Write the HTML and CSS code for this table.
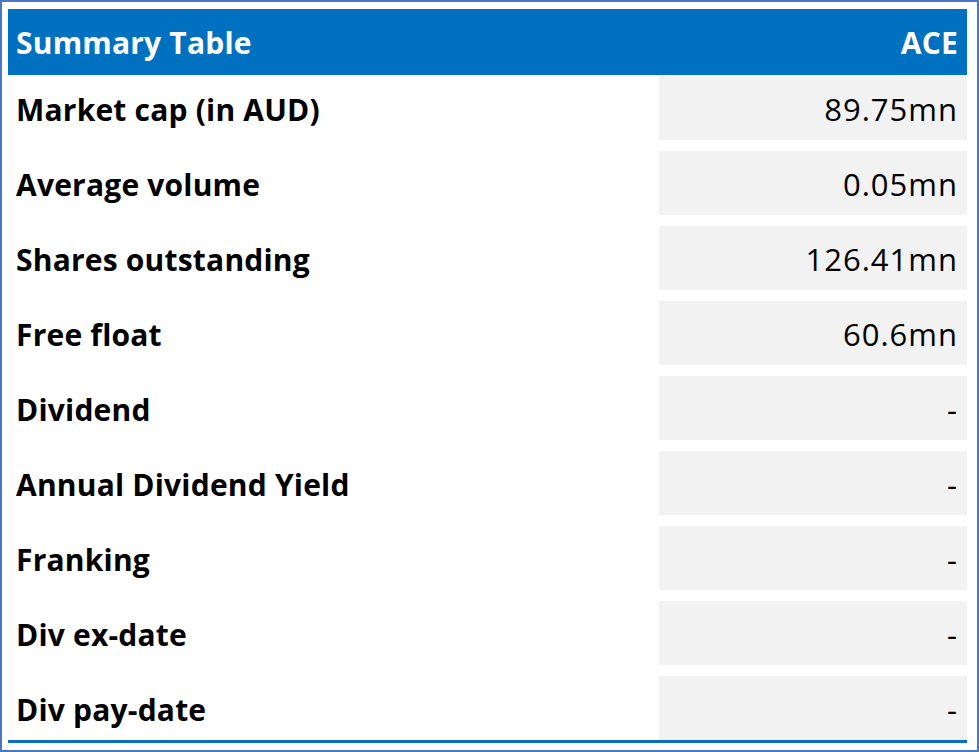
FILE: index.html
```html
<!DOCTYPE html>
<html>
<head>
<meta charset="utf-8">
<link rel="stylesheet" href="styles.css">
</head>
<body>
<div class="frame">
  <div class="table">
    <div class="head">
      <span class="head-title">Summary Table</span>
      <span class="head-ticker">ACE</span>
    </div>
    <div class="rows">
      <div class="row"><div class="label">Market cap (in AUD)</div><div class="value">89.75mn</div></div>
      <div class="row"><div class="label">Average volume</div><div class="value">0.05mn</div></div>
      <div class="row"><div class="label">Shares outstanding</div><div class="value">126.41mn</div></div>
      <div class="row"><div class="label">Free float</div><div class="value">60.6mn</div></div>
      <div class="row"><div class="label">Dividend</div><div class="value">-</div></div>
      <div class="row"><div class="label">Annual Dividend Yield</div><div class="value">-</div></div>
      <div class="row"><div class="label">Franking</div><div class="value">-</div></div>
      <div class="row"><div class="label">Div ex-date</div><div class="value">-</div></div>
      <div class="row"><div class="label">Div pay-date</div><div class="value">-</div></div>
    </div>
  </div>
</div>
</body>
</html>
```
FILE: styles.css
```css
html, body {
  margin: 0;
  padding: 0;
  background: #ffffff;
}
body {
  width: 979px;
  height: 752px;
  font-family: "Open Sans", "Noto Sans", sans-serif;
}
.frame {
  box-sizing: border-box;
  width: 979px;
  height: 752px;
  border: 2px solid #4a76c9;
  padding: 7px 10px 6px 6px;
}
.table {
  display: flex;
  flex-direction: column;
  border-bottom: 3px solid #0a6fc2;
}
.head {
  height: 66px;
  background: #0070c0;
  color: #ffffff;
  display: flex;
  align-items: center;
  justify-content: space-between;
  padding: 0 9px 0 8px;
  font-weight: 700;
  font-size: 30px;
  letter-spacing: 0.2px;
  margin-bottom: 1px;
}
.rows {
  display: flex;
  flex-direction: column;
  gap: 11px;
}
.row {
  display: grid;
  grid-template-columns: 651px 1fr;
  height: 64px;
}
.label {
  display: flex;
  align-items: center;
  padding: 2px 0 0 8px;
  font-weight: 700;
  font-size: 30px;
  letter-spacing: 0.2px;
  color: #000000;
}
.value {
  display: flex;
  align-items: center;
  justify-content: flex-end;
  padding: 2px 9px 0 0;
  background: #f2f2f2;
  font-size: 31px;
  letter-spacing: 1px;
  color: #000000;
}
```
